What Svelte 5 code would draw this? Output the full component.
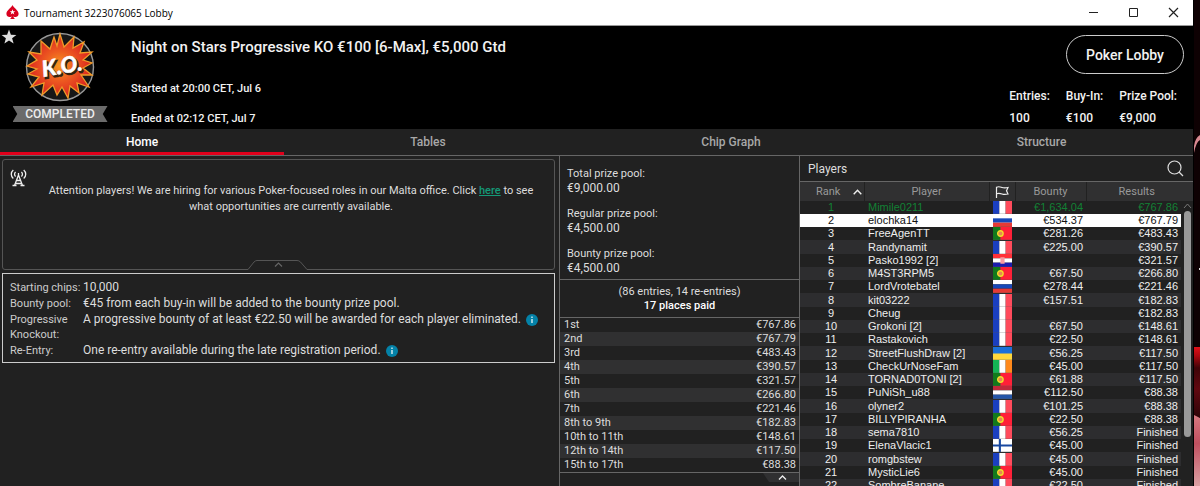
<script>
  const tabs = ['Home', 'Tables', 'Chip Graph', 'Structure'];
  const stats = [['Entries:', '100'], ['Buy-In:', '€100'], ['Prize Pool:', '€9,000']];
  const pools = [['Total prize pool:', '€9,000.00'], ['Regular prize pool:', '€4,500.00'], ['Bounty prize pool:', '€4,500.00']];
  const rules = [
    ['Starting chips:', '10,000', false],
    ['Bounty pool:', '€45 from each buy-in will be added to the bounty prize pool.', false],
    ['Progressive Knockout:', 'A progressive bounty of at least €22.50 will be awarded for each player eliminated.', true],
    ['Re-Entry:', 'One re-entry available during the late registration period.', true]
  ];
  const payouts = [
    ['1st', '€767.86'], ['2nd', '€767.79'], ['3rd', '€483.43'], ['4th', '€390.57'],
    ['5th', '€321.57'], ['6th', '€266.80'], ['7th', '€221.46'], ['8th to 9th', '€182.83'],
    ['10th to 11th', '€148.61'], ['12th to 14th', '€117.50'], ['15th to 17th', '€88.38']
  ];
  const players = [
    ['Mimile0211', 'fr', '€1,634.04', '€767.86'],
    ['elochka14', 'ru', '€534.37', '€767.79'],
    ['FreeAgenTT', 'pt', '€281.26', '€483.43'],
    ['Randynamit', 'fr', '€225.00', '€390.57'],
    ['Pasko1992 [2]', 'hr', '', '€321.57'],
    ['M4ST3RPM5', 'pt', '€67.50', '€266.80'],
    ['LordVrotebatel', 'ru', '€278.44', '€221.46'],
    ['kit03222', 'fr', '€157.51', '€182.83'],
    ['Cheug', 'fr', '', '€182.83'],
    ['Grokoni [2]', 'fr', '€67.50', '€148.61'],
    ['Rastakovich', 'fr', '€22.50', '€148.61'],
    ['StreetFlushDraw [2]', 'ua', '€56.25', '€117.50'],
    ['CheckUrNoseFam', 'ie', '€45.00', '€117.50'],
    ['TORNAD0TONI [2]', 'pt', '€61.88', '€117.50'],
    ['PuNiSh_u88', 'nl', '€112.50', '€88.38'],
    ['olyner2', 'fr', '€101.25', '€88.38'],
    ['BILLYPIRANHA', 'pt', '€22.50', '€88.38'],
    ['sema7810', 'fr', '€56.25', 'Finished'],
    ['ElenaVlacic1', 'fi', '€45.00', 'Finished'],
    ['romgbstew', 'fr', '€45.00', 'Finished'],
    ['MysticLie6', 'pt', '€45.00', 'Finished'],
    ['SombreBanane', 'fr', '€22.50', 'Finished']
  ];
  const bands = {
    fr: ['v', '#1a3fc0', '#ffffff', '#ff4b5c'],
    ie: ['v', '#14b455', '#ffffff', '#ff8a1c'],
    ru: ['h', '#ffffff', '#1748b8', '#e63a35'],
    nl: ['h', '#c02a3c', '#ffffff', '#2456a8'],
    hr: ['h', '#ff3038', '#ffffff', '#1c1cae']
  };
</script>

<div class="desktop">
  <div class="window">
    <div class="titlebar">
      <svg width="13" height="15" viewBox="0 0 13 15" aria-hidden="true">
        <path d="M6.5 0C5.6 2.6.4 5.3.4 8.8c0 3.4 3.8 4 5.2 2.4-.1 1.1-.6 2-1.500 2.800h4.800c-.9-.8-1.400-1.700-1.500-2.800 1.400 1.600 5.200 1 5.200-2.400C12.600 5.300 7.400 2.600 6.500 0z" fill="#d9001f" />
        <path d="m6.500 4.300.7 2h2.100L7.600 7.500l.7 2-1.800-1.200-1.800 1.200.7-2-1.700-1.200h2.100z" fill="#fff" />
      </svg>
      <span class="caption">Tournament 3223076065 Lobby</span>
      <button aria-label="Minimize"><svg width="11" height="11"><path d="M1 5.500h9" stroke="#222" /></svg></button>
      <button aria-label="Maximize"><svg width="11" height="11"><path d="M1.500 1.500h8v8h-8z" fill="none" stroke="#222" /></svg></button>
      <button aria-label="Close"><svg width="11" height="11"><path d="m1 1 9 9m0-9-9 9" fill="none" stroke="#222" stroke-width="1.200" /></svg></button>
    </div>

    <header>
      <button class="fav" aria-label="Favourite"><svg width="16" height="16" viewBox="0 0 16 16"><path d="m8 .5 1.900 5.200 5.500.2-4.300 3.400 1.500 5.300L8 11.500l-4.600 3.100 1.500-5.300L.6 5.900l5.500-.2z" fill="#ddd" /></svg></button>
      <div class="badge">
        <svg width="70" height="70" viewBox="0 0 70 70" role="img" aria-label="K.O.">
          <defs>
            <radialGradient id="blast" cx="50%" cy="50%" r="52%">
              <stop offset="0" stop-color="#f79a20" />
              <stop offset=".45" stop-color="#ed5a20" />
              <stop offset="1" stop-color="#d81e20" />
            </radialGradient>
          </defs>
          <circle cx="35" cy="35" r="33.500" fill="#171717" stroke="#999" stroke-width="1.400" />
          <path d="M35 2 39 15 49 5 48 16 59 10 55 21 67 20 58 28 67 31 58 36 67 43 56 43 64 55 52 51 54 61 45 54 43 66 37 55 32 63 28 53 17 63 19 51 6 55 14 45 3 42 12 37 2 34 12 28 4 20 16 22 16 9 25 17 29 5 32 14z" fill="url(#blast)" stroke="#f09a28" stroke-width="1.300" />
          <g transform="rotate(-10 35 35)" font-family="Lato, sans-serif" font-weight="900" font-style="italic" font-size="22">
            <text x="38" y="44" text-anchor="middle" fill="#321" stroke="#321" stroke-width="1.500">K.O.</text>
            <text x="37" y="42" text-anchor="middle" fill="#fff" stroke="#fff" stroke-width=".5">K.O.</text>
          </g>
        </svg>
        <span class="ribbon">COMPLETED</span>
      </div>
      <div class="info">
        <h1>Night on Stars Progressive KO €100 [6-Max], €5,000 Gtd</h1>
        <p>Started at 20:00 CET, Jul 6</p>
        <p>Ended at 02:12 CET, Jul 7</p>
      </div>
      <div class="summary">
        <button class="lobby">Poker Lobby</button>
        <dl>
          {#each stats as [k, v]}<div><dt>{k}</dt><dd>{v}</dd></div>{/each}
        </dl>
      </div>
    </header>

    <nav>
      {#each tabs as t, i}<button class:active={i === 0}>{t}</button>{/each}
    </nav>

    <main>
      <section class="home">
        <div class="notice">
          <svg class="mast" width="17" height="18" viewBox="0 0 17 18" fill="none" stroke="#eee" stroke-width="1.300" aria-hidden="true">
            <path d="M3.300 1C.6 3.300.6 7.300 3.300 9.500M13.700 1c2.700 2.300 2.700 6.300 0 8.500M5.600 3C4.200 4.300 4.200 6.300 5.600 7.600M11.400 3c1.400 1.300 1.400 3.300 0 4.600M8.500 4v3M8.500 6 4.500 16.500M8.500 6l4 10.500M6.500 11.500h4M5 14.500h7M2.500 16.500h4M10.500 16.500h4" />
          </svg>
          <p>Attention players! We are hiring for various Poker-focused roles in our Malta office. Click <a href="#careers">here</a> to see what opportunities are currently available.</p>
          <button class="fold" aria-label="Collapse notice">
            <svg width="62" height="11" viewBox="0 0 62 11"><path d="M0 9.500h1L7 2Q8.500.5 10 .5H50Q52 .5 53.500 2L60 9.500h2V11H0z" fill="#212121" /><path d="M0 9.500h1L7 2Q8.500.5 10 .5H50Q52 .5 53.500 2L60 9.500h2" fill="none" stroke="#555" /><path d="m28 6.500 3.500-3.500L35 6.500" fill="none" stroke="#666" stroke-width="1.200" /></svg>
          </button>
        </div>
        <dl class="rules">
          {#each rules as [k, v, info]}
            <dt>{k}</dt>
            <dd>{v}{#if info}<svg width="12" height="12" viewBox="0 0 12 12" role="img" aria-label="More information"><circle cx="6" cy="6" r="6" fill="#0482a8" /><path d="M6 5v4M6 2.500v1.500" stroke="#fff" stroke-width="1.200" /></svg>{/if}</dd>
          {/each}
        </dl>
      </section>

      <section class="prizes">
        <dl class="pools">
          {#each pools as [k, v]}<div><dt>{k}</dt><dd>{v}</dd></div>{/each}
        </dl>
        <div class="paid"><span>(86 entries, 14 re-entries)</span><b>17 places paid</b></div>
        <table class="payouts"><tbody>
          {#each payouts as [k, v]}<tr><td>{k}</td><td>{v}</td></tr>{/each}
        </tbody></table>
        <button class="more" aria-label="Collapse payouts"><svg width="36" height="9" viewBox="0 0 36 9"><path d="M0 0h36v9H6z" fill="#303031" /><path d="m16 6.500 3.500-3.500L23 6.500" fill="none" stroke="#eee" stroke-width="1.300" /></svg></button>
      </section>

      <section class="players">
        <div class="phead">
          <h2>Players</h2>
          <button aria-label="Search players"><svg width="17" height="17" viewBox="0 0 17 17" fill="none" stroke="#ddd" stroke-width="1.200"><circle cx="7.500" cy="7.500" r="6.500" /><path d="m12 12 4 4" /></svg></button>
        </div>
        <div class="list">
          <table>
            <colgroup><col class="c1" /><col /><col class="c3" /><col class="c4" /><col class="c5" /></colgroup>
            <thead><tr>
              <th><span>Rank</span><svg width="9" height="6" viewBox="0 0 9 6"><path d="m.7 5.200 3.800-4 3.800 4" fill="none" stroke="#eee" stroke-width="1.400" /></svg></th>
              <th>Player</th>
              <th aria-label="Country"><svg width="14" height="12" viewBox="0 0 14 12" fill="none" stroke="#eee" stroke-width="1.200"><path d="M1.500 12V1.200C4 .2 5 .8 7 1.500s3.500.6 6 0L11.500 4.800 13 8c-2.500.7-4 .7-6 0S4 7 1.500 7.800" /></svg></th>
              <th>Bounty</th>
              <th>Results</th>
            </tr></thead>
            <tbody>
              {#each players as [name, flag, bounty, result], i}
                <tr class:leader={i === 0} class:selected={i === 1}>
                  <td>{i + 1}</td>
                  <td>{name}</td>
                  <td>
                    <svg class="flag" viewBox="0 0 18 12" preserveAspectRatio="none" role="img" aria-label={flag}>
                      {#if bands[flag]}
                        {#each bands[flag].slice(1) as c, n}
                          {#if bands[flag][0] === 'v'}<rect x={n * 6} width="6" height="12" fill={c} />{:else}<rect y={n * 4} width="18" height="4" fill={c} />{/if}
                        {/each}
                        {#if flag === 'hr'}<rect x="7" y="3" width="4" height="6" fill="#f79aa0" />{/if}
                      {:else if flag === 'pt'}
                        <rect width="18" height="12" fill="#ff2038" /><rect width="7" height="12" fill="#127a1c" /><circle cx="7" cy="6" r="2.600" fill="#e58a50" stroke="#f2dc28" stroke-width="1.300" />
                      {:else if flag === 'ua'}
                        <rect width="18" height="12" fill="#ffd83c" /><rect width="18" height="6" fill="#1a70d8" />
                      {:else}
                        <rect width="18" height="12" fill="#fff" /><path d="M0 6h18M6.500 0v12" stroke="#1848a0" stroke-width="2" />
                      {/if}
                      <path d="M0 11.900h18" stroke="#555" stroke-width=".6" stroke-opacity=".6" />
                    </svg>
                  </td>
                  <td>{bounty}</td>
                  <td>{result}</td>
                </tr>
              {/each}
            </tbody>
          </table>
          <div class="scroll"><svg width="9" height="6" viewBox="0 0 9 6"><path d="m1 5 3.500-4L8 5" fill="none" stroke="#777" /></svg><div class="thumb"></div></div>
        </div>
      </section>
    </main>
  </div>
  <div class="wallpaper">
    <svg viewBox="0 0 6 486" preserveAspectRatio="none" aria-hidden="true">
      <defs>
        <linearGradient id="ember" x1="0" y1="0" x2="0" y2="1"><stop offset="0" stop-color="#e01018" /><stop offset=".12" stop-color="#b00810" /><stop offset=".3" stop-color="#400408" /><stop offset=".6" stop-color="#600810" /><stop offset="1" stop-color="#300408" /></linearGradient>
        <linearGradient id="chip" x1="0" y1="0" x2="0" y2="1"><stop offset="0" stop-color="#d87880" /><stop offset=".4" stop-color="#c05060" /><stop offset="1" stop-color="#dca0a4" /></linearGradient>
      </defs>
      <path d="M0 0h6v486H0z" fill="#0e0103" />
      <path d="M6 135Q1 138 0 146v7Q2 142 6 140z" fill="#d88890" />
      <path d="M5 268h1v2H5z" fill="#ddd" />
      <path d="M0 347h6v70H0z" fill="url(#ember)" />
      <path d="M0 415l6 3v68H0z" fill="url(#chip)" />
    </svg>
  </div>
</div>

<style>
  :global(body) { margin: 0; overflow: hidden; background: #000; }
  * { box-sizing: border-box; }
  .desktop { display: flex; height: 100vh; overflow: hidden; font-family: Roboto, sans-serif; font-size: 12px; color: #ddd; }
  .window { flex: 1; min-width: 0; display: flex; flex-direction: column; background: #212121; border-right: 1px solid #000; }
  .wallpaper { width: 6px; }
  .wallpaper svg { width: 100%; height: 100%; }
  button { padding: 0; border: 0; background: none; color: inherit; font: inherit; }
  svg { display: block; flex: none; }
  h1, h2, p, dl, dd { margin: 0; }
  dd, dt { white-space: nowrap; }
  table { border-collapse: collapse; border-spacing: 0; }
  td, th { padding: 0; }

  .titlebar { flex: none; display: flex; align-items: center; height: 26px; padding-left: 6px; background: #fff; color: #111; border-bottom: 1px solid #999; }
  .caption { flex: 1; margin-left: 5px; font-family: "Open Sans", sans-serif; font-size: 10px; color: #000; }
  .titlebar button { display: grid; place-items: center; width: 40px; height: 24px; }

  header { flex: none; display: flex; height: 103px; background: #000; color: #f2f2f2; font-weight: 500; }
  .fav { align-self: flex-start; width: 12px; margin: 3px 0 0 1px; }
  .badge { width: 94px; display: flex; flex-direction: column; align-items: center; padding-top: 6px; }
  .ribbon { width: 95px; height: 16px; margin-top: 4px; background: #6b6b6b; color: #eee; text-align: center; line-height: 17px; clip-path: polygon(0 0, 100% 0, 95% 50%, 100% 100%, 0 100%, 5% 50%); }
  .info { flex: 1; margin-left: 24px; padding-top: 12px; line-height: 18px; }
  h1 { margin-bottom: 24px; font-size: 15px; font-weight: 500; line-height: 18px; }
  .info p { margin-bottom: 12px; font-size: 11px; }
  .summary { display: flex; flex-direction: column; align-items: flex-end; padding: 9px 9px 0 0; }
  .lobby { width: 118px; height: 39px; border: 1px solid #ccc; border-radius: 20px; font-size: 14px; font-weight: 500; }
  .summary dl { display: flex; gap: 16px; margin: 11px 7px 0 0; line-height: 22px; }

  nav { flex: none; display: grid; grid-template-columns: 284fr 288fr 318fr 303fr; height: 27px; border-bottom: 1px solid #666; color: #a8a8a8; font-weight: 500; }
  nav button { padding-top: 3px; border-bottom: 3px solid transparent; }
  nav .active { border-color: #e0001b; color: #fff; }

  main { flex: 1; min-height: 0; display: grid; grid-template-columns: 559fr 241fr 393fr; }
  section { min-width: 0; min-height: 0; overflow: hidden; }
  .home { padding: 3px 4px 0 2px; }
  .notice { position: relative; display: flex; min-height: 111px; padding: 9px 16px 0 7px; border: 1px solid #555; border-radius: 3px; }
  .notice p { flex: 1; margin: 14px 0 0 17px; line-height: 16px; font-size: 11px; text-align: center; }
  a { color: #149a78; font-weight: 500; text-decoration: underline; }
  .fold { position: absolute; left: 244px; bottom: -2px; }
  .rules { display: grid; grid-template-columns: 73px 1fr; row-gap: 1px; margin-top: 3px; padding: 6px 7px 4px; border: 1px solid #ccc; line-height: 15px; }
  .rules dt { white-space: normal; font-size: 11px; color: #ccc; }
  .rules dd { display: flex; align-items: center; align-self: start; gap: 5px; font-size: 12px; }

  .prizes { display: flex; flex-direction: column; border: 0 solid #666; border-width: 0 1px; }
  .pools { display: grid; gap: 10px; padding: 10px 7px 3px; line-height: 15px; }
  .pools dt { font-size: 11px; }
  .paid { display: grid; padding: 5px 0 4px; border: 1px solid #666; border-width: 1px 0; line-height: 14px; text-align: center; font-size: 11px; }
  .paid b { font-weight: 500; color: #fff; }
  .payouts { width: 100%; border-bottom: 1px solid #666; font-size: 11px; line-height: 14px; }
  .payouts tr:nth-child(even) { background: #303031; }
  .payouts td { height: 14px; padding: 0 3px 0 4px; }
  .payouts td:last-child { text-align: right; }
  .more { align-self: flex-end; }

  .players { display: flex; flex-direction: column; }
  .phead { flex: none; display: flex; align-items: center; justify-content: space-between; height: 25px; padding: 0 9px 0 8px; }
  h2 { font-size: 12px; font-weight: 400; }
  .list { display: flex; flex: 1; min-height: 0; border-top: 1px solid #666; }
  .list table { flex: 1; align-self: flex-start; table-layout: fixed; font-family: "Liberation Sans", sans-serif; font-size: 11px; line-height: 13px; color: #eee; }
  .c1 { width: 64px; } .c3 { width: 26px; } .c4 { width: 71px; } .c5 { width: 95px; }
  thead { background: #303031; color: #999; font-family: Roboto, sans-serif; }
  th { height: 19px; border-right: 1px solid #212121; font-weight: 400; vertical-align: middle; }
  th:first-child { padding-left: 16px; text-align: left; }
  th:last-child { padding-left: 6px; border-right: 0; }
  th svg { display: inline-block; vertical-align: middle; }
  th span { margin-right: 13px; }
  tbody tr:nth-child(even) { background: #2d2d2f; }
  .list td { height: 13px; white-space: nowrap; }
  .list tbody tr:nth-child(4n) td { height: 14px; }
  .list td:nth-child(1) { padding-right: 2px; text-align: center; }
  .list td:nth-child(2) { padding-left: 4px; }
  .list td:nth-child(4) { padding-right: 3px; text-align: right; }
  .list td:nth-child(5) { padding-right: 3px; text-align: right; }
  .flag { width: 19px; height: 13px; margin: 0 auto; }
  .list .leader { color: #128034; }
  .list .selected { background: #fff; color: #111; }
  .scroll { width: 12px; display: flex; flex-direction: column; align-items: center; gap: 2px; padding-top: 21px; background: linear-gradient(#303031 19px, #212121 19px); }
  .thumb { width: 7px; height: 226px; border-radius: 4px; background: #999; }
</style>
